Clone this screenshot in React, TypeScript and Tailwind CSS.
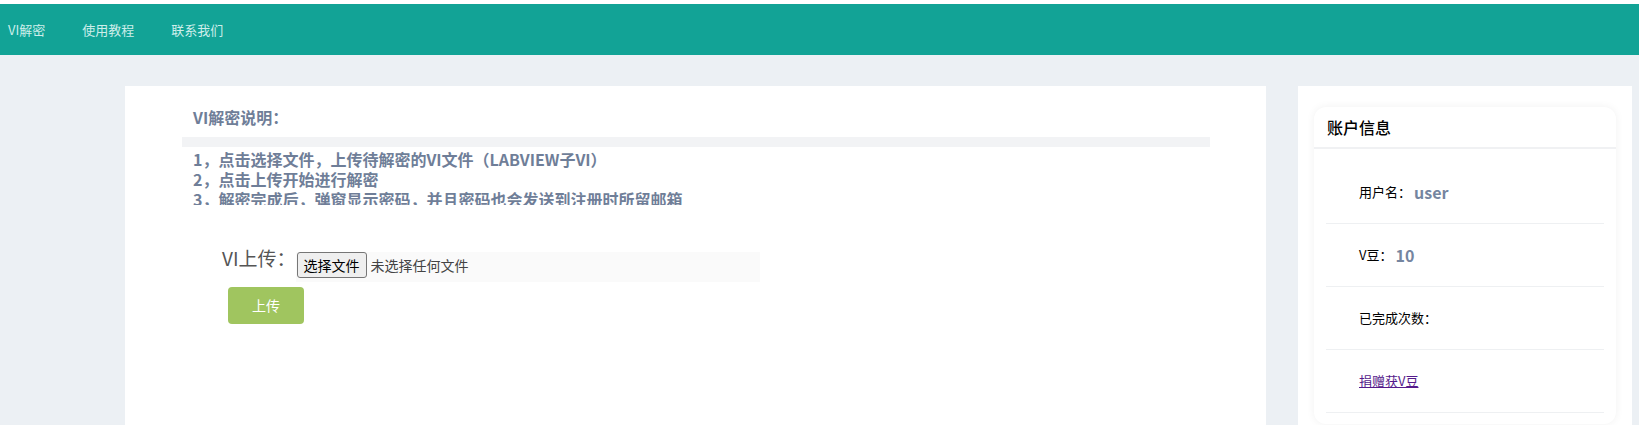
import React from "react";

const navItems = ["VI解密", "使用教程", "联系我们"];

const steps = [
  "1，点击选择文件，上传待解密的VI文件（LABVIEW子VI）",
  "2，点击上传开始进行解密",
  "3，解密完成后，弹窗显示密码，并且密码也会发送到注册时所留邮箱",
];

function AccountCard() {
  return (
    <div className="rounded-[12px] bg-white shadow-[0_0_8px_rgba(0,0,0,0.06)] pb-[11px]">
      {/* Header */}
      <div className="h-[42px] border-b-2 border-[#f0f1f3] pl-[13px] flex items-center text-[16px] font-medium text-black">
        账户信息
      </div>

      {/* Rows */}
      <div className="px-[12px] pt-[12px] text-[13px] text-black">
        <div className="h-[63px] border-b border-[#eef0f2] pl-[33px] flex items-center">
          <span>用户名：</span>
          <span className="ml-[3px] text-[16px] font-bold text-[#7585a0]">user</span>
        </div>
        <div className="h-[63px] border-b border-[#eef0f2] pl-[33px] flex items-center">
          <span>V豆：</span>
          <span className="ml-[3px] text-[16px] font-bold text-[#7585a0]">10</span>
        </div>
        <div className="h-[63px] border-b border-[#eef0f2] pl-[33px] flex items-center">
          <span>已完成次数：</span>
        </div>
        <div className="h-[63px] border-b border-[#eef0f2] pl-[33px] flex items-center">
          <a href="#" className="text-[#551a8b] underline">
            捐赠获V豆
          </a>
        </div>
      </div>
    </div>
  );
}

export default function App() {
  return (
    <div
      className="min-h-screen bg-[#ecf0f4]"
      style={{ fontFamily: '"Noto Sans CJK SC", "Noto Sans", sans-serif' }}
    >
      {/* Top nav */}
      <div className="bg-white pt-[4px]">
        <div className="h-[51px] bg-[#12a396] flex items-center gap-[37px] pl-2 text-[13px] text-[#cdeeea]">
          {navItems.map((n) => (
            <span key={n}>{n}</span>
          ))}
        </div>
      </div>

      {/* Content */}
      <div className="flex gap-[32px] pt-[31px] pl-[125px]">
        {/* Left panel */}
        <div className="w-[1141px] h-[360px] bg-white pt-[20px]">
          <div className="pl-[68px] text-[16px] leading-[22px] font-bold text-[#6f7e98]">VI解密说明：</div>
          <div className="mt-[9px] ml-[57px] w-[1028px] h-[10px] bg-[#f2f3f5]" />
          <div className="mt-[2px] h-[56px] overflow-hidden pl-[68px] text-[16px] leading-[20px] font-bold text-[#6f7e98]">
            {steps.map((s) => (
              <div key={s}>{s}</div>
            ))}
          </div>

          {/* Upload */}
          <div className="mt-[43px] pl-[97px] flex items-start">
            <span className="-mt-[1px] text-[19px] leading-[22px] text-[#555]">VI上传：</span>
            <div className="mt-[4px] w-[464px] h-[30px] bg-[#fafafa] pl-[1px] flex items-start">
              <span className="h-[26px] px-[6px] flex items-center border border-[#767676] rounded-[3px] bg-[#efefef] text-[14px] text-black">
                选择文件
              </span>
              <span className="ml-[4px] h-[26px] flex items-center text-[14px] text-[#444]">未选择任何文件</span>
            </div>
          </div>
          <button className="mt-[5px] ml-[103px] w-[76px] h-[37px] rounded-[4px] bg-[#a0c55f] text-white text-[14px]">
            上传
          </button>
        </div>

        {/* Right panel */}
        <div className="w-[334px] h-[360px] bg-white px-[16px] pt-[21px]">
          <AccountCard />
        </div>
      </div>
    </div>
  );
}
